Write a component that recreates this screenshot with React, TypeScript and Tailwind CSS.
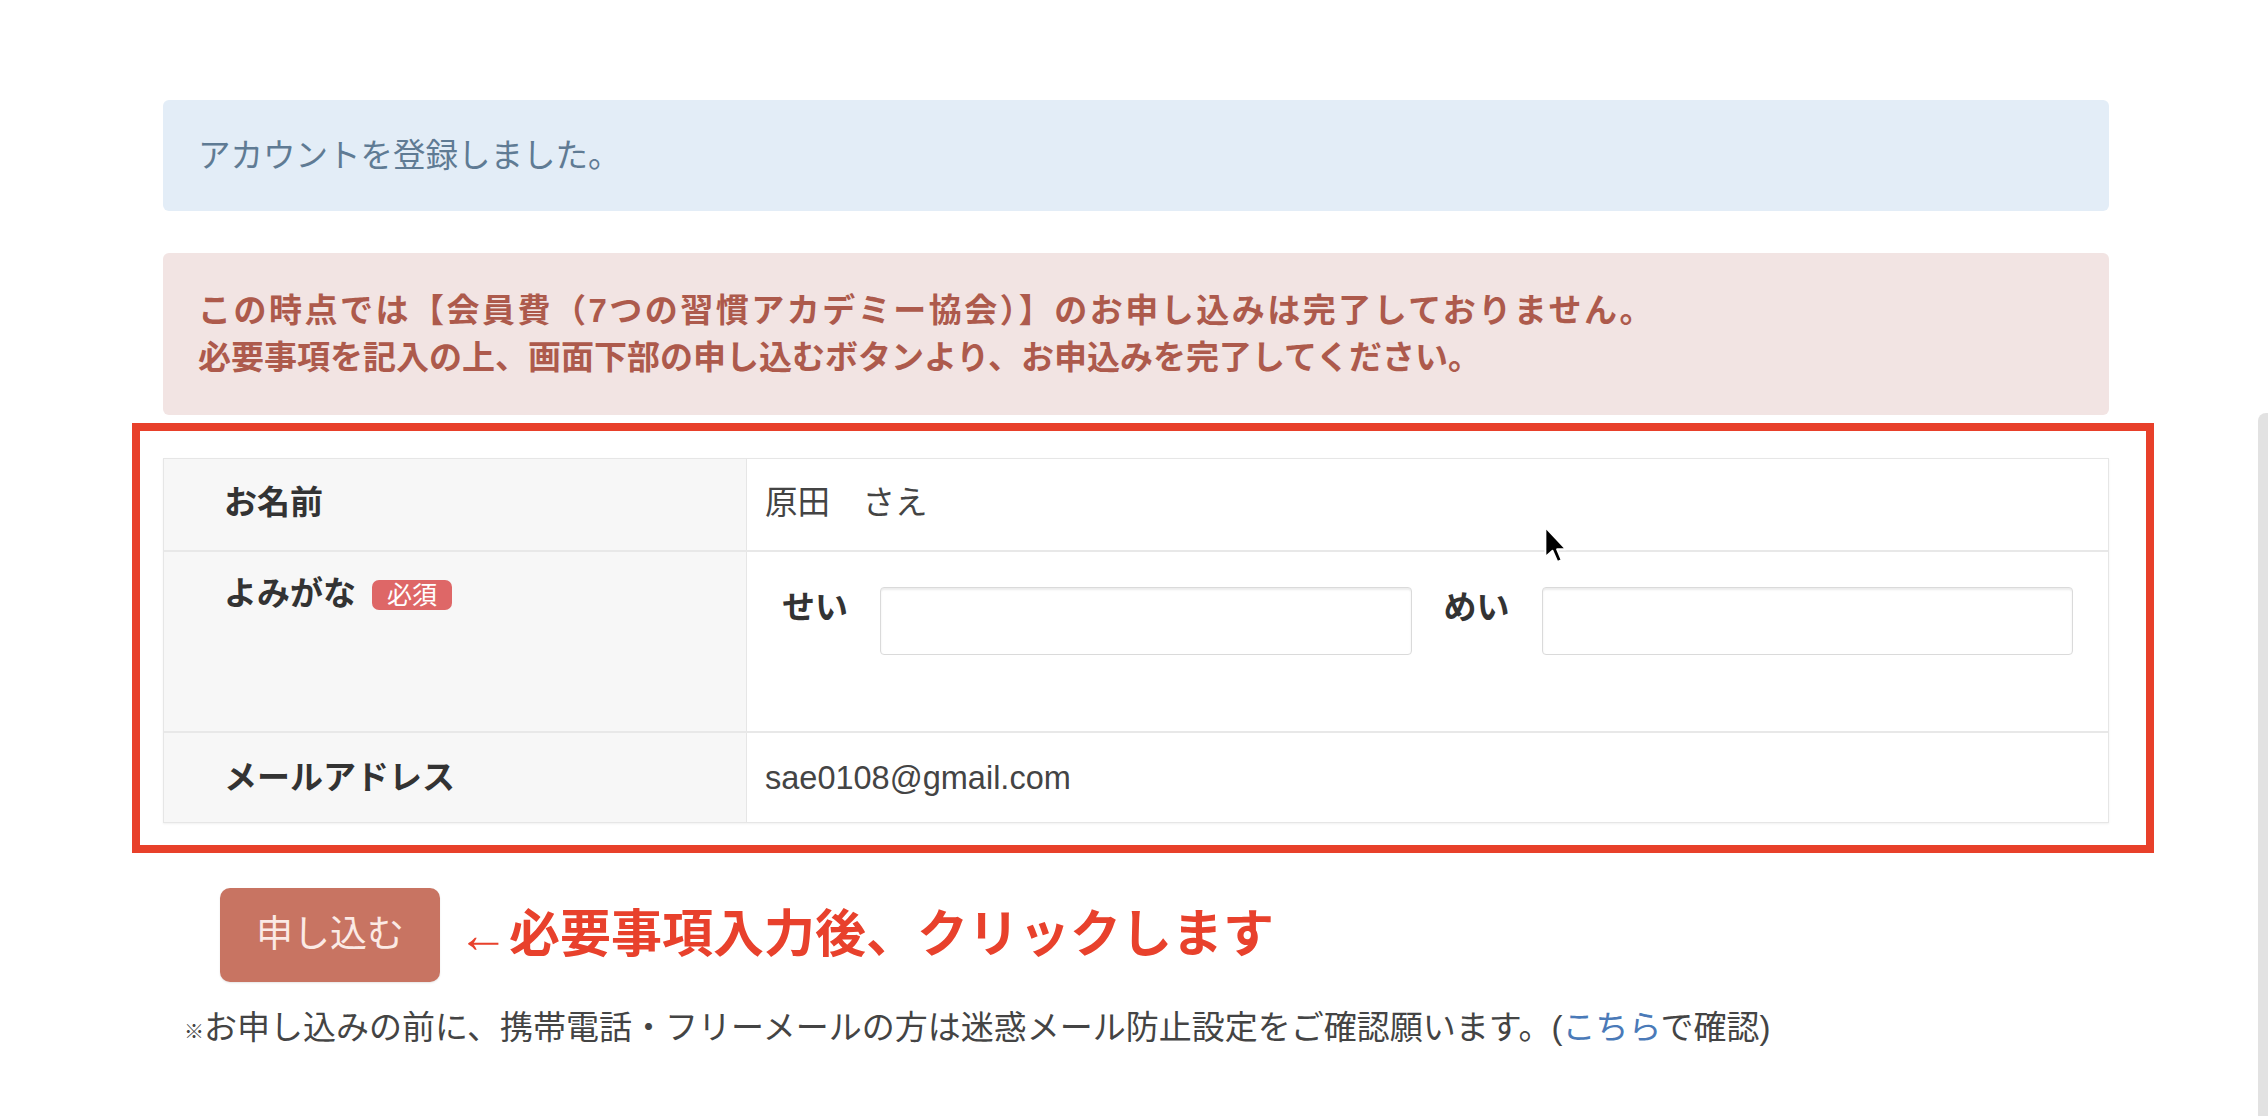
import React from 'react';

const rows = [
  { label: 'お名前', value: '原田　さえ' },
  { label: 'メールアドレス', value: 'sae0108@gmail.com' },
];

function Cursor() {
  return (
    <svg className="absolute left-[1544px] top-[526px]" width="24" height="38" viewBox="0 0 17 27">
      <path d="M1 1 L1 22 L6 17.5 L9.5 25.5 L12.5 24.2 L9.2 16.5 L15.5 16.5 Z" fill="#000" stroke="#fff" strokeWidth="1.3" strokeLinejoin="round" />
    </svg>
  );
}

export default function App() {
  return (
    <div className="relative w-[2268px] h-[1116px] overflow-hidden bg-white font-['Liberation_Sans','Noto_Sans_CJK_JP',sans-serif] text-[#333]">
      <div className="ml-[163px] w-[1946px] pt-[100px]">
        {/* info alert */}
        <div className="h-[111px] rounded-[6px] bg-[#e3edf7] px-[35px] flex items-center text-[32.5px] leading-[40px] text-[#5f7b94]">
          アカウントを登録しました。
        </div>

        {/* danger alert */}
        <div className="mt-[42px] h-[162px] rounded-[6px] bg-[#f2e4e3] px-[35px] flex flex-col justify-center text-[33px] leading-[47px] font-bold text-[#ad5a4c]">
          <p className="tracking-[2.5px]">この時点では【会員費（7つの習慣アカデミー協会）】のお申し込みは完了しておりません。</p>
          <p>必要事項を記入の上、画面下部の申し込むボタンより、お申込みを完了してください。</p>
        </div>

        {/* annotation frame */}
        <div className="mt-[8px] ml-[-31px] mr-[-45px] border-[8px] border-[#e8402a] pl-[23px] pr-[37px] pt-[27px] pb-[22px]">
          <div className="border border-[#e6e6e6] shadow-[0_1px_2px_rgba(0,0,0,0.06)]">
            <div className="flex h-[93px] border-b-2 border-[#e8e8e8]">
              <div className="w-[583px] shrink-0 bg-[#f7f7f7] border-r border-[#e6e6e6] pl-[60px] flex items-center pb-[4px] text-[33px] leading-[36px] font-bold">
                {rows[0].label}
              </div>
              <div className="flex-1 pl-[18px] flex items-center pb-[4px] text-[32.5px] leading-[36px] text-[#444]">
                {rows[0].value}
              </div>
            </div>
            <div className="flex h-[181px] border-b-2 border-[#e8e8e8]">
              <div className="w-[583px] shrink-0 bg-[#f7f7f7] border-r border-[#e6e6e6] pl-[60px] pt-[24px] flex items-start gap-[16px] text-[33px] leading-[36px] font-bold">
                <span>よみがな</span>
                <span className="mt-[4px] rounded-[7px] bg-[#de6767] px-[15px] text-[25px] leading-[30px] font-normal text-white">必須</span>
              </div>
              <div className="flex-1 pl-[35px] pr-[35px] pt-[35px] flex items-start gap-[32px]">
                <span className="pt-[3px] text-[33px] leading-[36px] font-bold">せい</span>
                <div className="flex-1 h-[68px] rounded-[4px] border border-[#dadada] bg-white shadow-[inset_0_2px_2px_rgba(0,0,0,0.08)]" />
                <span className="pt-[3px] text-[33px] leading-[36px] font-bold">めい</span>
                <div className="flex-1 h-[68px] rounded-[4px] border border-[#dadada] bg-white shadow-[inset_0_2px_2px_rgba(0,0,0,0.08)]" />
              </div>
            </div>
            <div className="flex h-[89px]">
              <div className="w-[583px] shrink-0 bg-[#f7f7f7] border-r border-[#e6e6e6] pl-[60px] flex items-center text-[33px] leading-[36px] font-bold">
                {rows[1].label}
              </div>
              <div className="flex-1 pl-[18px] flex items-center text-[32.5px] leading-[36px] text-[#444]">
                {rows[1].value}
              </div>
            </div>
          </div>
        </div>

        {/* submit */}
        <div className="mt-[35px] ml-[57px] flex items-center gap-[18px]">
          <button className="w-[220px] h-[94px] rounded-[10px] bg-[#c87462] text-[37px] text-[#fbeae5] shadow-[0_1px_2px_rgba(0,0,0,0.1)]">
            申し込む
          </button>
          <span className="text-[51px] leading-[60px] font-bold text-[#e8412c]">←必要事項入力後、クリックします</span>
        </div>

        <p className="mt-[26px] ml-[21px] text-[33px] leading-[40px] text-[#444]">
          <span className="text-[20px]">※</span>お申し込みの前に、携帯電話・フリーメールの方は迷惑メール防止設定をご確認願います。(<span className="text-[#4a7ab8]">こちら</span>で確認)
        </p>
      </div>

      <div className="absolute left-[2258px] top-[413px] w-[12px] h-[720px] rounded-tl-[8px] bg-[#e2e2e2]" />
      <Cursor />
    </div>
  );
}
